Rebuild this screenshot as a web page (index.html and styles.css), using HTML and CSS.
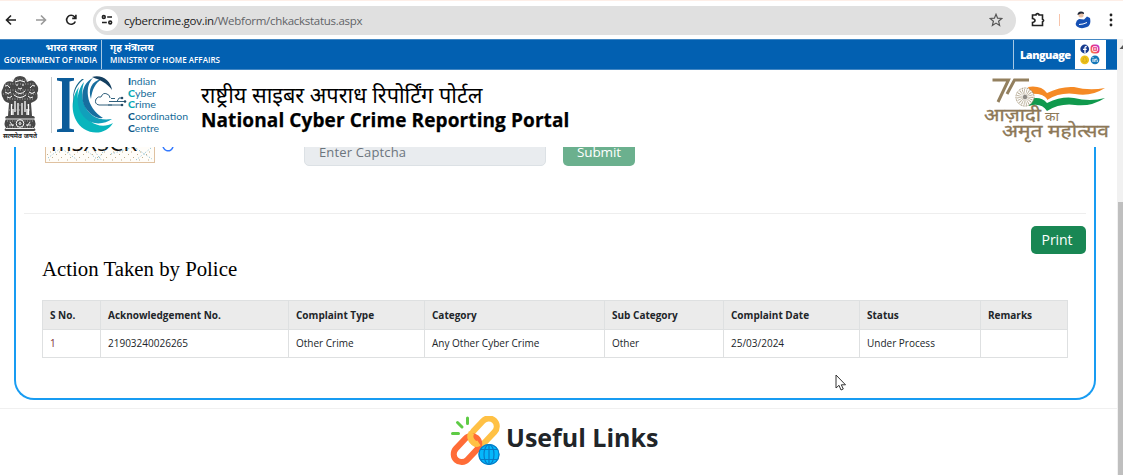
FILE: index.html
```html
<!DOCTYPE html>
<html lang="en">
<head>
<meta charset="utf-8">
<title>National Cyber Crime Reporting Portal</title>
<link rel="stylesheet" href="styles.css">
</head>
<body>
<header class="browser">
  <div class="nav-buttons">
    <svg width="12" height="12" viewBox="0 0 12 12" class="ink"><path d="M11 6H1.5M6 1.5L1.5 6L6 10.500"/></svg>
    <svg width="12" height="12" viewBox="0 0 12 12" class="ink faded"><path d="M1 6H10.500M6 1.500L10.500 6L6 10.500"/></svg>
    <svg width="12" height="12" viewBox="0 0 12 12" class="ink"><path d="M10.300 7.500A4.500 4.500 0 1 1 9.500 2.800L10.800 4.200M10.900 .7V4.400H7.200"/></svg>
  </div>
  <div class="address">
    <span class="site-info"><svg width="12" height="12" viewBox="0 0 12 12" class="ink"><circle cx="2.800" cy="3" r="1.400"/><path d="M6.200 3H11M1 8.500H5.800"/><circle cx="9.200" cy="8.500" r="1.400"/></svg></span>
    <span class="url"><b>cybercrime.gov.in</b>/Webform/chkackstatus.aspx</span>
    <svg class="star" width="14" height="14" viewBox="0 0 14 14"><path d="M7 1.300L8.600 5.200L12.800 5.500L9.600 8.200L10.600 12.400L7 10.100L3.400 12.400L4.400 8.200L1.200 5.500L5.400 5.200Z"/></svg>
  </div>
  <svg class="ink puzzle" width="16" height="16" viewBox="0 0 16 16"><path d="M2.500 3H6V2.300Q7.500 1 9 2.300V3H12.500V7.300Q14.800 8.500 12.500 9.700V13.500H2.500V10.500Q5 10 5 8.500T2.500 6.500Z"/></svg>
  <span class="divider"></span>
  <svg class="avatar" width="16" height="18" viewBox="0 0 16 18"><circle cx="6" cy="4" r="2.600" fill="#e7c1a8"/><path d="M2.500 4Q2.500 .5 6 .5T9 3Q6 2 4 3.500Z" fill="#202635"/><path d="M1 12Q1 9.500 4 8L9 8.500L12 5.500L15 7Q16.500 14 12 16Q6 18.500 2 15.500Q0 13.500 1 12Z" fill="#1550b4"/><path d="M4 13.500Q8 13.500 12 11.500" stroke="#fff" fill="none"/></svg>
  <svg class="dots" width="4" height="14" viewBox="0 0 4 14"><circle cx="2" cy="2" r="1.400"/><circle cx="2" cy="7" r="1.400"/><circle cx="2" cy="12" r="1.400"/></svg>
</header>
<div class="viewport">
  <div class="page">
    <div class="gov-bar">
      <div class="gov india"><span class="hi">भारत सरकार</span><span class="en">GOVERNMENT OF INDIA</span></div>
      <div class="gov ministry"><span class="hi">गृह मंत्रालय</span><span class="en">MINISTRY OF HOME AFFAIRS</span></div>
      <div class="language">Language</div>
      <div class="social">
        <svg width="20" height="21" viewBox="0 0 20 21">
          <defs><linearGradient id="insta" x1="0" y1="1" x2="1" y2="0"><stop offset="0" stop-color="#ff9b3d"/><stop offset=".5" stop-color="#ef3373"/><stop offset="1" stop-color="#b13ae8"/></linearGradient></defs>
          <circle cx="4.700" cy="5" r="4.400" fill="#173b8f"/><path d="M5 9.300V3.800Q5 2.300 6.800 2.500M3 5.300H6.700" stroke="#fff" stroke-width="1.300" fill="none"/>
          <rect x="10.500" y=".5" width="9" height="9" rx="3.500" fill="url(#insta)"/><rect x="12.500" y="2.500" width="5" height="5" rx="1.500" fill="none" stroke="#fff" stroke-width=".8"/><circle cx="15" cy="5" r="1" fill="none" stroke="#fff" stroke-width=".7"/>
          <circle cx="4.700" cy="15.800" r="4.400" fill="#efc21b"/><path d="M2.300 17.300Q3.700 16.500 3.300 14.200Q4.700 12 6.100 14.200Q5.700 16.500 7.100 17.300L4.700 18.300Z" fill="none" stroke="#c9a21a" stroke-width=".7"/>
          <circle cx="15" cy="15.800" r="4.400" fill="#1477b8"/><path d="M13 14.800V18M13 13V13.900M14.900 18V14.800M14.900 16.300Q15.200 14.900 16.300 15Q17.200 15.200 17.200 16.500V18" stroke="#fff" fill="none"/>
        </svg>
      </div>
    </div>
    <div class="masthead">
      <svg class="emblem" width="40" height="66" viewBox="0 0 40 66">
        <g fill="#484848">
          <path d="M13 7Q14 1 20 1T27 7Q33 3 36 9Q40 13 37 18Q39 23 35 26L31 28L32 41H8L9 28Q4 27 3 23Q0 18 3 13Q5 4 13 7Z"/>
          <path d="M7 41H33Q36 42 34 44Q37 49 34 53Q37 55 34 56H6Q3 55 6 53Q3 49 6 44Q4 42 7 41Z"/>
        </g>
        <g fill="none" stroke="#fff">
          <path d="M15 7Q20 4 25 7M16 10H18M22 10H24M18 13Q20 15 22 13M15 16Q20 21 25 16M14 20Q20 25 26 20M5 11Q8 9 10 13M35 11Q32 9 30 13M5 17Q8 20 11 17M35 17Q32 20 29 17M7 22Q10 24 12 21M33 22Q30 24 28 21"/>
          <path d="M11.500 29V40M15 26V37M18 28V40M22 28V40M25 26V37M28.500 29V40M13 40V34M27 40V34" stroke-width="1.300"/>
          <circle cx="20" cy="48.500" r="3.800"/><circle cx="20" cy="48.500" r="1"/>
          <path d="M6 44H34M6 53.500H34M9 50H14M26 50H31M10 47L13 51M30 47L27 51" stroke-width=".9"/>
        </g>
        <g stroke="#c4c4c4" stroke-width=".8" stroke-dasharray="1 1.500"><path d="M5 15H35M3 19H36M7 24H33M12 5H28M5 9H35M7 46H34M7 52H34M12 30H29M9 35H31"/></g>
        <text x="3" y="63" textLength="34" lengthAdjust="spacingAndGlyphs" class="motto">सत्यमेव जयते</text>
      </svg>
      <svg class="i4c" width="140" height="62" viewBox="0 0 140 62">
        <path d="M.5 1V57" stroke="#c5c9cc"/>
        <path d="M6 2H23V4.500L18.500 5.500V52.500L23 53.500V56H6V53.500L11 52.500V5.500L6 4.500Z" fill="#0c5c9a"/>
        <g>
          <path d="M28 11C18 24 20 44 33 53C44 60 57 56 62 47C50 54 36 47 30 33C26 23 26 17 28 11Z" fill="#08b5bd"/>
          <path d="M33 6C24 17 25 33 34 42C42 50 54 48 61 43C49 45 39 41 34 30C30 21 31 13 33 6Z" fill="#11a0bb"/>
          <path d="M31 3Q19 13 23 31Q20 13 33 3Z" fill="#17678c"/>
          <path d="M42 2C31 7 29 21 34 31C39 39 46 43 52 42C44 37 38 29 37 20C36 12 38 6 42 2Z" fill="#176e9f"/>
          <path d="M51 3C40 5 37 14 40 23C41 14 44 7 51 3Z" fill="#176e9f"/>
          <path d="M41 1C51 -2 60 5 61 14C56 7 49 4 41 1Z" fill="#143f60"/>
        </g>
        <path d="M61 29H48Q43 28 45 23Q47 20 50 21Q52 16 56 18Q59 19 59 22" fill="none" stroke="#31617d"/>
        <path d="M57 29H70M58 25.500H74M66 25.500L68 22H71M60 22.500H64" fill="none" stroke="#31617d"/>
        <g fill="#244b65"><circle cx="71" cy="22" r="1.300"/><circle cx="74" cy="25.500" r="1.300"/><circle cx="71" cy="29" r="1.300"/></g>
        <g class="i4c-name">
          <text x="77" y="8.500" textLength="28" lengthAdjust="spacingAndGlyphs"><tspan class="initial">I</tspan>ndian</text>
          <text x="77" y="20.500" textLength="28" lengthAdjust="spacingAndGlyphs"><tspan class="initial teal">C</tspan>yber</text>
          <text x="77" y="32" textLength="28" lengthAdjust="spacingAndGlyphs"><tspan class="initial teal">C</tspan>rime</text>
          <text x="77" y="43.500" textLength="60" lengthAdjust="spacingAndGlyphs"><tspan class="initial">C</tspan>oordination</text>
          <text x="77" y="55.500" textLength="31" lengthAdjust="spacingAndGlyphs"><tspan class="initial">C</tspan>entre</text>
        </g>
      </svg>
      <div class="title"><span class="title-hi">राष्ट्रीय साइबर अपराध रिपोर्टिंग पोर्टल</span><span class="title-en">National Cyber Crime Reporting Portal</span></div>
      <svg class="azadi" width="130" height="68" viewBox="0 0 130 68">
        <path d="M9.500 3H25.500L15 25M46 3H31.500L24 17" fill="none" stroke="#93805f" stroke-width="3"/>
        <path d="M45 10Q58 8 64 16Q78 9 91 10Q106 14 122 11Q108 20 92 17Q77 15 64 23Q60 16 48 17Z" fill="#f58a25"/>
        <path d="M46 17Q60 16 64 22V28Q58 21 46 24Z" fill="#fff"/>
        <path d="M47 22Q58 19 64 26Q79 19 91 21Q107 25 122 21Q108 30 92 28Q77 26 64 34Q58 25 46 29Z" fill="#10994d"/>
        <circle cx="42" cy="20" r="9" fill="#fff" stroke="#93805f" stroke-dasharray="1 .7"/>
        <circle cx="42" cy="20" r="5" fill="none" stroke="#b3a78f" stroke-width="6" stroke-dasharray=".6 1"/><circle cx="42" cy="20" r="2.200" fill="#8d8a85"/>
        <text x="1" y="44" class="azadi-name" textLength="57" lengthAdjust="spacingAndGlyphs">आज़ादी</text>
        <text x="62" y="44" class="azadi-small" textLength="14" lengthAdjust="spacingAndGlyphs">का</text>
        <text x="19" y="59.500" class="azadi-name" textLength="107" lengthAdjust="spacingAndGlyphs">अमृत महोत्सव</text>
      </svg>
    </div>
    <main class="content">
      <section class="panel">
        <form class="captcha-row">
          <div class="captcha">
            <svg width="108" height="30" viewBox="0 0 108 30">
              <text x="5" y="18.500" textLength="86" lengthAdjust="spacingAndGlyphs">mSX5CK</text>
              <g fill="none" stroke="#5ba3bf" stroke-width=".8" stroke-dasharray="1 2"><path d="M2 26L15 16L30 27M40 18L52 28L60 15M47 17L56 29M65 22L88 15L106 27M90 28L105 16"/></g>
              <g fill="none" stroke="#b09a70" stroke-width=".8" stroke-dasharray="1 8"><path d="M4 20H104M1 22.500H105M6 25.500H103M3 28H106"/></g>
            </svg>
          </div>
          <svg class="reload" width="12" height="12" viewBox="0 0 12 12"><path d="M11 6.500A5 5 0 1 1 9 1.800M11 .5V4H7.500"/></svg>
          <div class="input">Enter Captcha</div>
          <div class="btn submit">Submit</div>
        </form>
        <div class="print-row"><div class="btn">Print</div></div>
        <h2>Action Taken by Police</h2>
        <table>
          <colgroup><col class="w-no"><col class="w-ack"><col class="w-type"><col class="w-cat"><col class="w-sub"><col class="w-date"><col class="w-status"><col></colgroup>
          <tr><th>S No.</th><th>Acknowledgement No.</th><th>Complaint Type</th><th>Category</th><th>Sub Category</th><th>Complaint Date</th><th>Status</th><th>Remarks</th></tr>
          <tr><td class="serial">1</td><td>21903240026265</td><td>Other Crime</td><td>Any Other Cyber Crime</td><td>Other</td><td>25/03/2024</td><td>Under Process</td><td></td></tr>
        </table>
      </section>
      <section class="links">
        <svg width="50" height="50" viewBox="0 0 50 50">
          <g fill="none" stroke-width="6"><rect x="-8" y="-15" width="16" height="30" rx="8" transform="translate(34 15.500) rotate(43)" stroke="#ffc145"/><rect x="-8" y="-15" width="16" height="30" rx="8" transform="translate(16.500 33) rotate(43)" stroke="#ff6c37"/><path d="M21.500 16.500Q18 22 24 27Q26 29 29 27" stroke="#ffc145"/></g>
          <path d="M17.500 2V7.500M7.500 6.500L12 11M2.500 17.500H8.500" fill="none" stroke="#5ecb45" stroke-width="3" stroke-linecap="round"/>
          <circle cx="39" cy="38.500" r="10.500" fill="#05b7fb"/><g fill="none" stroke="#087bc5" stroke-width="1.200"><circle cx="39" cy="38.500" r="10"/><ellipse cx="39" cy="38.500" rx="5" ry="10"/><path d="M39 28.500V48.500M30 33.500H48M30 43.500H48"/></g>
        </svg>
        <h1>Useful Links</h1>
      </section>
    </main>
  </div>
  <aside class="scrollbar"><svg width="6" height="8" viewBox="0 0 6 8"><path d="M2.500 6L6 2V6Z" fill="#555"/></svg><div class="thumb"></div></aside>
</div>
<svg class="cursor" width="12" height="18" viewBox="0 0 12 18"><path d="M1 1V14L4 11.300L6 16L8.300 15L6.300 10.800H10.500Z" fill="#fff" stroke="#333"/></svg>
</body>
</html>
```
FILE: styles.css
```css
* { box-sizing: border-box; }
body { margin: 0; width: 1123px; height: 475px; overflow: hidden; display: flex; flex-direction: column; background: #fff; font-family: "Open Sans", "Noto Sans", sans-serif; color: #212529; }
svg { display: block; flex: none; }
.browser { height: 39px; flex: none; display: flex; align-items: center; border-top: 1px solid #fdeee7; padding-right: 8px; }
.ink { fill: none; stroke: #222; stroke-width: 1.6; }
.faded { stroke: #999; }
.nav-buttons { display: flex; gap: 18px; width: 93px; padding-left: 5px; flex: none; }
.address { width: 923px; height: 29px; border-radius: 15px; background: #e0e0e0; display: flex; align-items: center; padding: 0 13px 0 3px; }
.site-info { width: 22px; height: 22px; border-radius: 50%; background: #fff; display: grid; place-items: center; }
.url { margin-left: 6px; font-size: 11.500px; letter-spacing: -.28px; color: #606367; flex: 1; }
.url b { font-weight: 400; color: #222; }
.star { fill: none; stroke: #555; stroke-width: 1.200; }
.puzzle { margin-left: 14px; }
.divider { width: 1px; height: 12px; background: #f7c4ab; margin: 0 15px 0 13px; flex: none; }
.avatar { margin-right: 18px; }
.dots { fill: #222; }
.viewport { display: flex; height: 436px; }
.page { width: 1117px; display: flex; flex-direction: column; }
.gov-bar { height: 31px; flex: none; background: #0260b1; border-top: 1px solid #4387c3; border-bottom: 1px solid #4387c3; display: flex; color: #fff; font-weight: 700; }
.gov { display: flex; flex-direction: column; padding-top: 1px; }
.india { width: 102px; border-right: 1px solid #a6c8e4; align-items: flex-end; padding-right: 4px; }
.ministry { padding-left: 8px; flex: 1; }
.hi { font-size: 10px; line-height: 13px; white-space: nowrap; }
.en { font-size: 8px; line-height: 12px; letter-spacing: .03px; font-weight: 600; white-space: nowrap; }
.language { width: 62px; border-left: 1px solid #a6c8e4; font-size: 11px; line-height: 30px; padding-left: 6px; font-weight: 800; letter-spacing: -.55px; }
.social { width: 31px; background: #fff; margin-right: 11px; padding: 4px 0 0 5px; }
.masthead { height: 77px; flex: none; display: flex; align-items: flex-start; background: #fff; }
.emblem { margin-top: 5px; }
.motto { font: 700 7px "Noto Sans", sans-serif; fill: #222; }
.i4c { margin: 6px 0 0 11px; }
.i4c-name { font: 10px Lato, sans-serif; fill: #176d9a; }
.initial { font-weight: 900; fill: #0b5788; }
.teal { fill: #08a9b5; }
.title { display: flex; flex-direction: column; margin-left: 10px; padding-top: 12px; flex: 1; color: #000; white-space: nowrap; }
.title-hi { font-size: 21.700px; line-height: 26px; }
.title-en { font-size: 19px; line-height: 25px; font-weight: 700; letter-spacing: .1px; -webkit-text-stroke: .25px #000; }
.azadi { margin: 7px 4px 0 0; }
.azadi-name { font: 17px "Noto Sans", sans-serif; fill: #8d7857; stroke: #8d7857; stroke-width: .3; }
.azadi-small { font: 12px "Noto Sans", sans-serif; fill: #8d7857; }
.content { height: 328px; overflow: hidden; }
.panel { width: 1082px; height: 253px; margin-left: 14px; border: 2px solid #189cf2; border-top: 0; border-radius: 0 0 20px 20px; padding: 0 8px; }
.captcha-row { height: 67px; display: flex; align-items: flex-start; border-bottom: 1px solid #eee; padding-left: 21px; }
.captcha { width: 110px; height: 16px; border: 1px solid #dfc1a0; border-top: 0; display: flex; align-items: flex-end; overflow: hidden; background: #fffdf9; }
.captcha text { font: 21px "Open Sans", sans-serif; fill: #111; }
.reload { margin: -7px 0 0 7px; fill: none; stroke: #347aff; stroke-width: 1.500; }
.input { width: 242px; height: 28px; margin: -9px 0 0 130px; border: 1px solid #dce1e5; border-radius: 5px; background: #e9ecef; color: #6c757d; font-size: 13px; line-height: 27px; padding-left: 14px; letter-spacing: .15px; }
.btn { width: 55px; height: 28px; border-radius: 5px; background: #198754; color: #fff; font-size: 14px; line-height: 28px; text-align: center; padding-right: 3px; letter-spacing: -.1px; }
.submit { width: 72px; margin: -9px 0 0 17px; background: #6bb08e; font-size: 13.500px; padding-right: 0; }
.print-row { display: flex; justify-content: flex-end; padding-top: 12px; }
h2 { margin: 0 0 0 18px; font: 20.800px/30px "Liberation Serif", serif; color: #000; }
table { width: 1026px; margin: 16px 0 0 18px; table-layout: fixed; border-collapse: collapse; font-size: 10px; }
th, td { height: 28.500px; padding: 0 7px; border: 1px solid #dee0e1; text-align: left; white-space: nowrap; }
th { background: #ebebeb; }
.serial { color: #7b3030; }
.w-no { width: 58px; }
.w-ack { width: 188px; }
.w-type { width: 136px; }
.w-cat { width: 180px; }
.w-sub { width: 119px; }
.w-date { width: 136px; }
.w-status { width: 121px; }
.links { height: 67px; margin-top: 8px; border-top: 1px solid #f0f0f0; display: flex; align-items: flex-start; padding: 7px 0 0 450px; }
h1 { font-size: 25px; line-height: 34px; margin: 4px 0 0 6px; }
.scrollbar { width: 6px; background: #f1f1f1; display: flex; flex-direction: column; padding-top: 4px; }
.thumb { margin: 151px 0 0 1px; flex: 1; background: #bfbfbf; }
.cursor { position: absolute; left: 835px; top: 374px; }
```
